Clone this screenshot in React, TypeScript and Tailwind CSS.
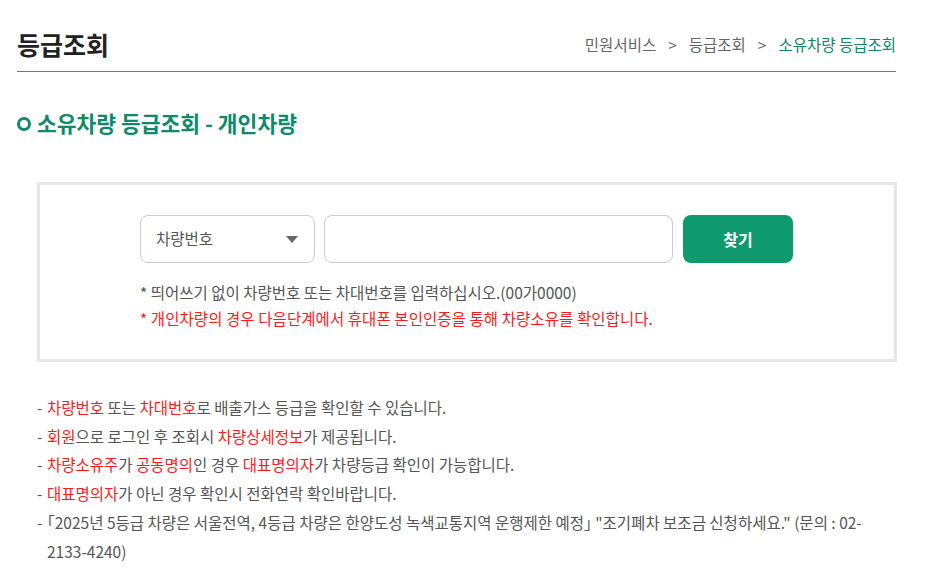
import React from "react";

const R = ({ children }: { children: React.ReactNode }) => <span className="text-[#ff1a1a]">{children}</span>;

export default function App() {
  return (
    <div
      className="w-[940px] h-[580px] bg-white overflow-hidden"
      style={{ fontFamily: '"Noto Sans CJK KR", "Noto Sans", sans-serif' }}
    >
      <div className="ml-[17px] w-[879px]">
        <div className="flex items-end justify-between h-[72px] border-b border-[#777] pb-[11px]">
          <h1 className="text-[25px] font-bold text-[#222] leading-[32px]">등급조회</h1>
          <div className="text-[15.5px] text-[#666] leading-[20px] pb-[6px] flex items-center gap-[12px]">
            <span>민원서비스</span>
            <span>&gt;</span>
            <span>등급조회</span>
            <span>&gt;</span>
            <span className="text-[#0b8a66]">소유차량 등급조회</span>
          </div>
        </div>
        <div className="flex items-center gap-[6px] mt-[37px] h-[28px]">
          <span className="w-[14px] h-[14px] rounded-full border-[3.5px] border-[#0e8a69] mt-[1px]" />
          <h2 className="text-[21.5px] font-bold text-[#0e8a69] leading-[28px]">소유차량 등급조회 - 개인차량</h2>
        </div>
      </div>

      <div className="ml-[37px] mt-[45px] w-[860px] h-[180px] border-[3px] border-[#e6e6e6] pt-[30px] pl-[100px]">
        <div className="flex gap-[9px]">
          <div className="w-[175px] h-[48px] border border-[#cccccc] rounded-[8px] flex items-center justify-between pl-[15px] pr-[16px]">
            <span className="text-[15.5px] text-[#555]">차량번호</span>
            <svg width="12" height="7" viewBox="0 0 12 7"><path d="M0 0 L12 0 L6 7 Z" fill="#666" /></svg>
          </div>
          <div className="w-[349px] h-[48px] border border-[#cccccc] rounded-[8px]" />
          <button className="w-[110px] h-[48px] rounded-[8px] bg-[#0f9a6d] text-white text-[16px] font-bold ml-[1px]">찾기</button>
        </div>
        <div className="mt-[16px] text-[15.5px] leading-[26px]">
          <p className="text-[#555]">* 띄어쓰기 없이 차량번호 또는 차대번호를 입력하십시오.(00가0000)</p>
          <p className="text-[#ff1a1a] tracking-[0.07px]">* 개인차량의 경우 다음단계에서 휴대폰 본인인증을 통해 차량소유를 확인합니다.</p>
        </div>
      </div>

      <ul className="ml-[37px] mt-[31px] w-[850px] text-[15.5px] leading-[28.7px] text-[#555]">
        <li className="flex"><span className="w-[10px] shrink-0">-</span><span><R>차량번호</R> 또는 <R>차대번호</R>로 배출가스 등급을 확인할 수 있습니다.</span></li>
        <li className="flex"><span className="w-[10px] shrink-0">-</span><span><R>회원</R>으로 로그인 후 조회시 <R>차량상세정보</R>가 제공됩니다.</span></li>
        <li className="flex"><span className="w-[10px] shrink-0">-</span><span><R>차량소유주</R>가 <R>공동명의</R>인 경우 <R>대표명의자</R>가 차량등급 확인이 가능합니다.</span></li>
        <li className="flex"><span className="w-[10px] shrink-0">-</span><span><R>대표명의자</R>가 아닌 경우 확인시 전화연락 확인바랍니다.</span></li>
        <li className="flex"><span className="w-[10px] shrink-0">-</span><span><span className="[font-feature-settings:'halt']">「</span>2025년 5등급 차량은 서울전역, 4등급 차량은 한양도성 녹색교통지역 운행제한 예정<span className="[font-feature-settings:'halt']">」</span> "조기폐차 보조금 신청하세요." (문의 : 02-<br />2133-4240)</span></li>
      </ul>
    </div>
  );
}
